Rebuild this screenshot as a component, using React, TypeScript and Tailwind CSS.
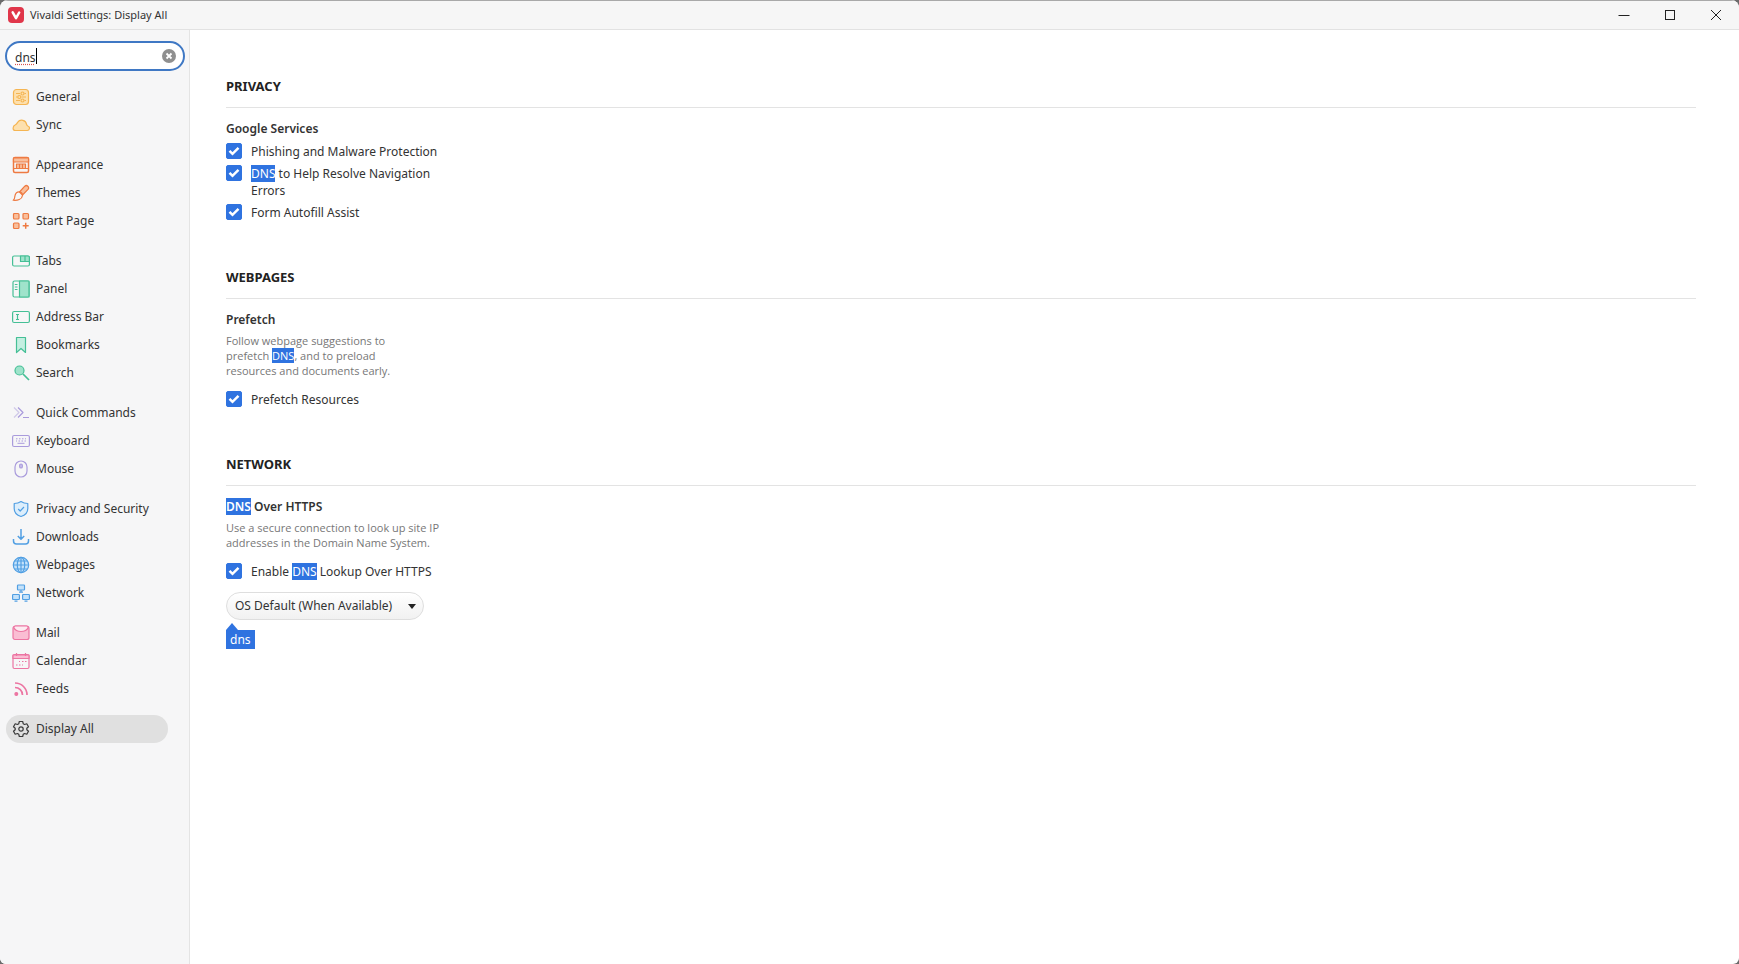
import { useState, type ReactNode } from 'react';
import { clsx } from 'clsx';

interface NavItem {
  label: string;
  icon: ReactNode;
}

interface NavGroup {
  color: string;
  items: NavItem[];
}

const navGroups: NavGroup[] = [
  {
    color: 'text-[#f5b553]',
    items: [
      {
        label: 'General',
        icon: (
          <>
            <rect x="1.5" y="1.5" width="15" height="15" rx="3" fill="#fde0ae" />
            <path d="M4 5.500h4M12.500 5.500H14M4 9h1.500M9.500 9H14M4 12.500h4M12.500 12.500H14" />
            <circle cx="10.500" cy="5.500" r="1.500" />
            <circle cx="7.300" cy="9" r="1.500" />
            <circle cx="10.500" cy="12.500" r="1.500" />
          </>
        ),
      },
      {
        label: 'Sync',
        icon: (
          <path
            d="M3.5 14.5h11.5a2.3 2.3 0 0 0 .8-4.5c-.6-.3-1-.8-1.200-1.500a5 5 0 0 0-9-2.200c-.6 1-.7 1.700-2.200 2.500C.3 10.200.3 14.500 3.500 14.500z"
            fill="#fde0ae"
          />
        ),
      },
    ],
  },
  {
    color: 'text-[#ee7a42]',
    items: [
      {
        label: 'Appearance',
        icon: (
          <>
            <rect x="1.500" y="1.500" width="15" height="15" rx="1.500" strokeWidth="1.500" />
            <path d="M1.500 2h15v4h-15z" fill="#f9bf9c" />
            <path d="M4.500 8h9v4.500h-9z" fill="#f9bf9c" />
            <path d="M7.500 8v4.500M10.500 8v4.500M1.500 12.500h15" />
          </>
        ),
      },
      {
        label: 'Themes',
        icon: (
          <>
            <path d="M7.500 8 12.800 2.200c2-1.900 5 1 3.200 3.200L10.500 11z" fill="#f9bf9c" />
            <path d="M7 7.800c2.200 0 3.800 1.700 3.500 3.700-.4 3.700-5 5.200-9.300 4.700 2-1.200 1.200-2.700 1.800-4.700.6-2.200 2-3.700 4-3.700z" />
          </>
        ),
      },
      {
        label: 'Start Page',
        icon: (
          <>
            <rect x="1.500" y="1.500" width="5.500" height="5.500" rx="1" fill="#f9bf9c" />
            <rect x="11" y="1.500" width="5.500" height="5.500" rx="1" fill="#f9bf9c" />
            <rect x="1.500" y="11" width="5.500" height="5.500" rx="1" fill="#f9bf9c" />
            <path d="M13.700 10.700v6M10.700 13.700h6" strokeWidth="1.500" />
          </>
        ),
      },
    ],
  },
  {
    color: 'text-[#45bf96]',
    items: [
      {
        label: 'Tabs',
        icon: (
          <>
            <rect x=".6" y="4" width="16.800" height="10" rx="1.500" />
            <path d="M8.500 4H16a1.400 1.400 0 0 1 1.400 1.400V9.500H8.500z" fill="#9fe3cb" />
            <path d="M13 4v5.500" />
          </>
        ),
      },
      {
        label: 'Panel',
        icon: (
          <>
            <rect x="1" y="1" width="16" height="16" rx="1.500" />
            <path d="M7.500 1H17v16H7.500z" fill="#9fe3cb" />
            <path d="M2.800 4.500h2.700M2.800 7h2.700M2.800 9.500h2.700" />
          </>
        ),
      },
      {
        label: 'Address Bar',
        icon: (
          <>
            <rect x=".6" y="3.500" width="16.800" height="11" rx="1.500" />
            <path d="M4 6.500h3M4 11.500h3M5.500 6.500v5" />
          </>
        ),
      },
      {
        label: 'Bookmarks',
        icon: <path d="M4.500 1.500h9v15L9 12.500l-4.500 4z" fill="#c4efe1" />,
      },
      {
        label: 'Search',
        icon: (
          <>
            <circle cx="7.500" cy="6.500" r="4.500" fill="#9fe3cb" />
            <path d="m11 10 6 6" strokeWidth="1.700" />
          </>
        ),
      },
    ],
  },
  {
    color: 'text-[#a99bdc]',
    items: [
      {
        label: 'Quick Commands',
        icon: (
          <>
            <path d="m2 3.500 5 5-5 5" opacity=".5" />
            <path d="m6 3.500 5 5-5 5M11 13.500h6" />
          </>
        ),
      },
      {
        label: 'Keyboard',
        icon: (
          <>
            <rect x=".6" y="3.500" width="16.800" height="11" rx="1.500" />
            <path d="M4 6.800h1.500M7 6.800h1.500M10 6.800h1.500M13 6.800h1M4 9h1M6.500 9H8M9.500 9H11M12.500 9H14M5.500 11.300h7" strokeWidth="1" />
          </>
        ),
      },
      {
        label: 'Mouse',
        icon: (
          <>
            <rect x="3" y="1" width="12" height="16" rx="6" />
            <rect x="7.700" y="4" width="2.600" height="4" rx="1.300" fill="#cfc6f0" />
          </>
        ),
      },
    ],
  },
  {
    color: 'text-[#519fe3]',
    items: [
      {
        label: 'Privacy and Security',
        icon: (
          <>
            <path
              d="M9 1.500c2 1.400 4.200 2 6.800 2v5c0 4-2.700 6.800-6.800 8-4.100-1.200-6.800-4-6.800-8v-5c2.600 0 4.800-.6 6.800-2z"
              fill="#dceefc"
            />
            <path d="m6.200 9 2 2 3.800-4" />
          </>
        ),
      },
      {
        label: 'Downloads',
        icon: (
          <path
            d="M9 1v10M5.800 8 9 11.200 12.200 8M1.500 11v2a3 3 0 0 0 3 3h9a3 3 0 0 0 3-3v-2"
            strokeWidth="1.500"
          />
        ),
      },
      {
        label: 'Webpages',
        icon: (
          <>
            <circle cx="9" cy="9" r="7.700" fill="#c5e2fa" />
            <ellipse cx="9" cy="9" rx="3.700" ry="7.700" />
            <path d="M9 1.300v15.400M1.300 9h15.400M2.500 5h13M2.500 13h13" />
          </>
        ),
      },
      {
        label: 'Network',
        icon: (
          <>
            <rect x="5.500" y="1" width="7" height="5" rx=".7" fill="#c5e2fa" />
            <rect x=".6" y="10.500" width="6.800" height="5" rx=".7" fill="#c5e2fa" />
            <rect x="10.600" y="10.500" width="6.800" height="5" rx=".7" fill="#c5e2fa" />
            <path d="M9 6v2.200M7 8.200h4M2.500 17.200h3M12.500 17.200h3" />
          </>
        ),
      },
    ],
  },
  {
    color: 'text-[#ec75a2]',
    items: [
      {
        label: 'Mail',
        icon: (
          <>
            <path d="M1 4.500A2.500 2.500 0 0 1 3.500 2h11A2.500 2.500 0 0 1 17 4.500v9a2 2 0 0 1-2 2H3a2 2 0 0 1-2-2z" fill="#fabdd3" />
            <path d="M1.700 3.500C3 6.200 5 7.500 9 7.500s6-1.300 7.300-4C15.800 2.500 15 2 14.500 2h-11c-.5 0-1.300.5-1.800 1.500z" fill="#fdeaf1" />
          </>
        ),
      },
      {
        label: 'Calendar',
        icon: (
          <>
            <rect x="1" y="2.500" width="16" height="14" rx="1.500" />
            <path d="M1 3h16v3.500H1z" fill="#fabdd3" />
            <path d="M4.500 1v3M13.500 1v3M10 9.500h1.500M13 9.500h1.500M7 9.500h1M4 13h1.500M7 13h1.500M10 13h1" />
          </>
        ),
      },
      {
        label: 'Feeds',
        icon: (
          <>
            <circle cx="4.300" cy="14" r="1.400" fill="currentColor" />
            <path d="M3 7.500a7.500 7.500 0 0 1 7.500 7.500M3 3a12 12 0 0 1 12 12" strokeWidth="1.700" />
          </>
        ),
      },
    ],
  },
  {
    color: 'text-[#3a3a3a]',
    items: [
      {
        label: 'Display All',
        icon: (
          <>
            <path d="M7.300 1.500h3.400l.5 2.200 1.400.8 2.200-.7 1.700 2.900-1.700 1.500v1.600l1.700 1.500-1.700 2.900-2.200-.7-1.400.8-.5 2.200H7.300l-.5-2.200-1.400-.8-2.200.7-1.700-2.900 1.700-1.500V8.200L1.500 6.700l1.700-2.900 2.200.7 1.400-.8z" />
            <circle cx="9" cy="9" r="2.200" />
          </>
        ),
      },
    ],
  },
];

const Hit = ({ children }: { children: ReactNode }) => (
  <mark className="bg-[#2f73e0] text-white">{children}</mark>
);

const TitleBar = () => (
  <header className="flex h-[30px] items-center border-t border-b border-t-[#a9a9a9] border-b-[#e2e2e2] bg-[#f6f6f6] pl-2">
    <svg viewBox="0 0 16 16" className="size-4" aria-hidden="true">
      <rect width="16" height="16" rx="4" fill="#e0364a" />
      <path
        d="M4.700 5.300 8 11.200l3.200-5.700"
        fill="none"
        stroke="#fff"
        strokeWidth="2.500"
        strokeLinecap="round"
        strokeLinejoin="round"
      />
    </svg>
    <h1 className="ml-[6px] text-[11px]">Vivaldi Settings: Display All</h1>
    <div className="ml-auto flex h-full">
      <button type="button" aria-label="Minimize" className="flex w-[46px] items-center justify-center">
        <svg viewBox="0 0 12 12" className="size-3" fill="none" stroke="#222">
          <path d="M.5 6.500h11" />
        </svg>
      </button>
      <button type="button" aria-label="Maximize" className="flex w-[46px] items-center justify-center">
        <svg viewBox="0 0 12 12" className="size-3" fill="none" stroke="#222">
          <rect x="1.500" y="1.500" width="9" height="9" />
        </svg>
      </button>
      <button type="button" aria-label="Close" className="flex w-[46px] items-center justify-center">
        <svg viewBox="0 0 12 12" className="size-3" fill="none" stroke="#222">
          <path d="m1 1 10 10M11 1 1 11" />
        </svg>
      </button>
    </div>
  </header>
);

const Sidebar = () => {
  const [query, setQuery] = useState('dns');
  const [active, setActive] = useState('Display All');

  return (
    <aside className="w-[190px] shrink-0 border-r border-[#e4e4e4] bg-[#f6f6f7] pt-[11px]">
      <div className="relative mr-1 ml-[5px] flex h-[30px] items-center rounded-full border-2 border-[#3f78c4] bg-white pr-[7px] pl-2">
        <input
          type="text"
          aria-label="Search settings"
          value={query}
          onChange={(e) => setQuery(e.target.value)}
          spellCheck={false}
          className="min-w-0 flex-1 pt-[3px] underline decoration-[#d9534f] decoration-dotted underline-offset-2 outline-none"
        />
        {/* text caret */}
        <span className="absolute left-[29px] h-4 w-px bg-black" />
        <button type="button" aria-label="Clear search" onClick={() => setQuery('')}>
          <svg viewBox="0 0 14 14" className="size-[14px]" aria-hidden="true">
            <circle cx="7" cy="7" r="7" fill="#8f8f8f" />
            <path d="m4.500 4.500 5 5M9.500 4.500l-5 5" stroke="#fff" strokeWidth="1.800" />
          </svg>
        </button>
      </div>
      <nav className="mt-3 flex flex-col gap-3 pr-[21px] pl-[6px]">
        {navGroups.map((group) => (
          <ul key={group.items[0].label}>
            {group.items.map((item) => (
              <li key={item.label}>
                <button
                  type="button"
                  onClick={() => setActive(item.label)}
                  className={clsx(
                    'flex h-7 w-full items-center gap-[6px] rounded-full pl-[6px] text-left',
                    active === item.label && 'bg-[#e0e0e0]'
                  )}
                >
                  <svg
                    viewBox="0 0 18 18"
                    className={clsx('size-[18px] shrink-0', group.color)}
                    fill="none"
                    stroke="currentColor"
                    strokeWidth="1.200"
                    strokeLinejoin="round"
                    aria-hidden="true"
                  >
                    {item.icon}
                  </svg>
                  {item.label}
                </button>
              </li>
            ))}
          </ul>
        ))}
      </nav>
    </aside>
  );
};

const Section = ({ title, heading, children }: { title: string; heading: ReactNode; children: ReactNode }) => (
  <section>
    <h2 className="border-b border-[#e3e3e3] pb-[11px] text-[13px] leading-5 font-bold text-[#222]">{title}</h2>
    <h3 className="mt-[11px] leading-5 font-semibold">{heading}</h3>
    {children}
  </section>
);

const Description = ({ children }: { children: ReactNode }) => (
  <p className="mt-[3px] mb-[13px] font-['Open_Sans','Noto_Sans',sans-serif] text-[11px] leading-[15px] text-[#777]">
    {children}
  </p>
);

const CheckRow = ({ children }: { children: ReactNode }) => (
  <label className="flex w-[218px] gap-[9px] leading-[17px]">
    <span className="grid size-4 shrink-0">
      <input
        type="checkbox"
        defaultChecked
        className="peer col-start-1 row-start-1 size-4 appearance-none rounded-[2px] border border-[#2f73e0] checked:bg-[#2f73e0]"
      />
      <svg
        viewBox="0 0 16 16"
        className="pointer-events-none invisible col-start-1 row-start-1 size-4 peer-checked:visible"
        fill="none"
        stroke="#fff"
        strokeWidth="2.500"
        aria-hidden="true"
      >
        <path d="m3.500 7.800 3 3 6-6" />
      </svg>
    </span>
    <span>{children}</span>
  </label>
);

const App = () => {
  return (
    <div className="min-h-screen bg-[#6b6b6b] font-['Noto_Sans','Open_Sans',sans-serif] text-[12px] text-[#333]">
      <div className="flex min-h-screen flex-col overflow-hidden rounded-t-lg rounded-b-md bg-white">
        <TitleBar />
        <div className="flex flex-1">
          <Sidebar />
          <main className="flex min-w-0 flex-1 flex-col gap-[46px] pt-[46px] pr-[43px] pb-10 pl-9">
            <Section title="PRIVACY" heading="Google Services">
              <div className="mt-1 flex flex-col gap-[5px]">
                <CheckRow>Phishing and Malware Protection</CheckRow>
                <CheckRow>
                  <Hit>DNS</Hit> to Help Resolve Navigation Errors
                </CheckRow>
                <CheckRow>Form Autofill Assist</CheckRow>
              </div>
            </Section>

            <Section title="WEBPAGES" heading="Prefetch">
              <Description>
                Follow webpage suggestions to
                <br />
                prefetch <Hit>DNS</Hit>, and to preload
                <br />
                resources and documents early.
              </Description>
              <CheckRow>Prefetch Resources</CheckRow>
            </Section>

            <Section
              title="NETWORK"
              heading={
                <>
                  <Hit>DNS</Hit> Over HTTPS
                </>
              }
            >
              <Description>
                Use a secure connection to look up site IP
                <br />
                addresses in the Domain Name System.
              </Description>
              <CheckRow>
                Enable <Hit>DNS</Hit> Lookup Over HTTPS
              </CheckRow>
              <div className="mt-3 grid w-[198px] items-center">
                <select
                  aria-label="DNS provider"
                  className="col-start-1 row-start-1 h-7 w-full appearance-none rounded-full border border-[#dedede] bg-linear-to-b from-white to-[#f1f1f1] pl-2"
                >
                  <option>OS Default (When Available)</option>
                </select>
                <svg
                  viewBox="0 0 8 5"
                  className="pointer-events-none col-start-1 row-start-1 mr-2 h-[5px] w-2 justify-self-end"
                  aria-hidden="true"
                >
                  <path d="M0 0h8L4 5z" fill="#222" />
                </svg>
              </div>
              {/* bubble with the term that matched inside the drop-down */}
              <div className="mt-[3px] flex flex-col items-start">
                <svg viewBox="0 0 12 7" className="h-[7px] w-3" aria-hidden="true">
                  <path d="M0 7 6 0l6 7z" fill="#2f73e0" />
                </svg>
                <span className="bg-[#2f73e0] px-1 leading-[19px] text-white">dns</span>
              </div>
            </Section>
          </main>
        </div>
      </div>
    </div>
  );
};

export default App;
